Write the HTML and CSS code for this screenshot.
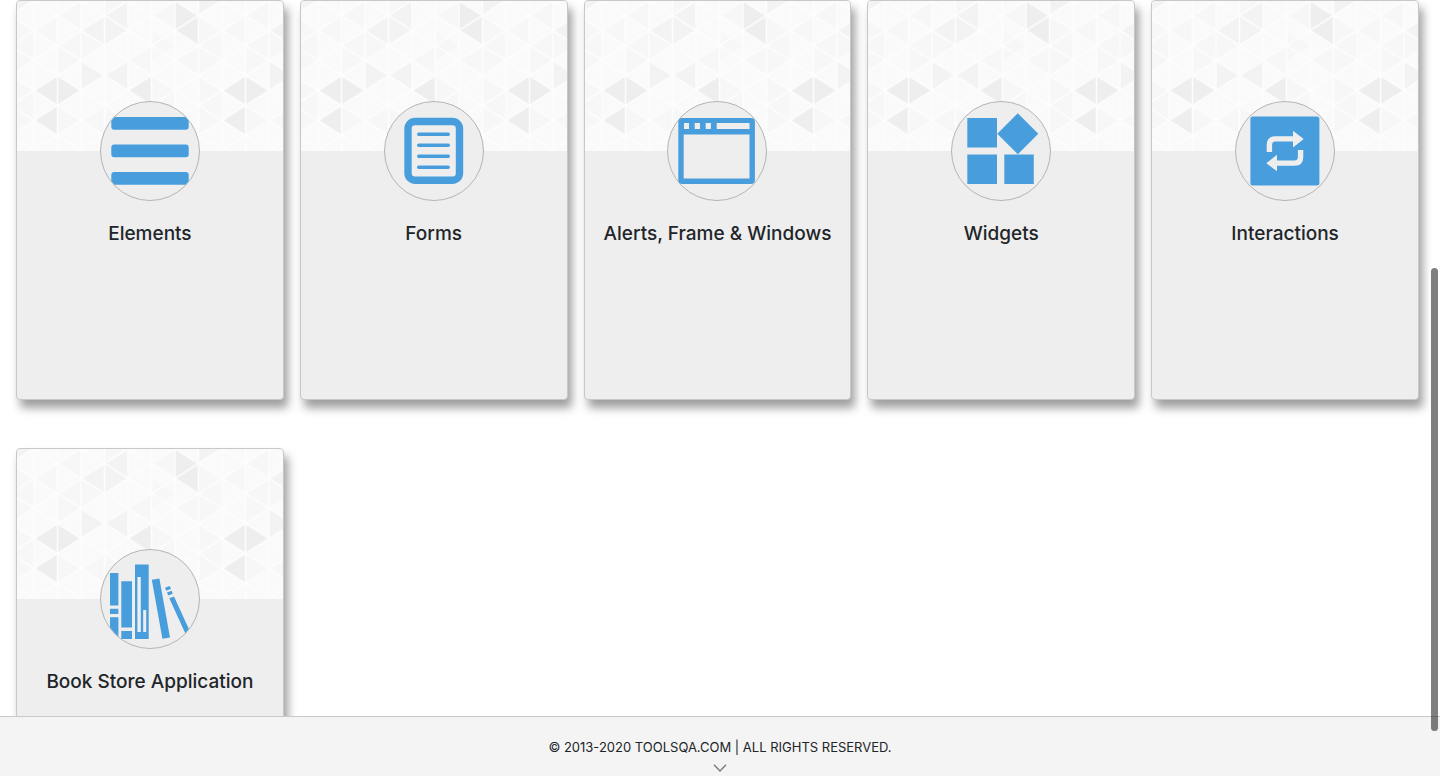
FILE: index.html
```html
<!DOCTYPE html>
<html lang="en">
<head>
<meta charset="utf-8">
<title>ToolsQA</title>
<link rel="stylesheet" href="styles.css">
</head>
<body>
<svg class="defs" width="0" height="0" aria-hidden="true">
  <defs>
    <clipPath id="disc"><circle cx="50" cy="50" r="49"/></clipPath>
    <pattern id="shades" x="34" y="-1" width="376" height="302" patternUnits="userSpaceOnUse">
      <rect width="376" height="302" fill="#fafafa"/>
      <path fill="#f7f7f7" d="M376 60l-47-30v60zM376 120l-47-30v60zM329 90l47-30v60zM376 180l-47-30v60zM0 60l47-30v60zM94 120l-47-30v60zM47 90l47-30v60zM188 120l47-30v60zM282 90l-47-30v60zM282 120l47-30v60zM282 180l-47-30v60zM235 210l47-30v60zM94 240l-47-30v60zM94 240l47-30v60zM188 240l-47-30v60zM141 270l47-30v60zM282 270l-47-30v60zM376 240l-47-30v60zM235 30l47-30v60zM47 30l47-30v60zM188 0l-47-30v60zM141 90l-47-30v60zM329 210l47-30v60z"/>
      <path fill="#f3f3f3" d="M94 60l47-30v60zM188 60l-47-30v60zM141 30l47-30v60zM141 150l-47-30v60zM141 150l47-30v60zM235 240l47-30v60zM376 0l-47-30v60z"/>
      <path fill="#eee" d="M0 180l47-30v60zM94 180l-47-30v60zM0 240l47-30v60zM188 180l47-30v60zM329 30l-47-30v60zM282 60l47-30v60z"/>
    </pattern>
    <pattern id="mesh" x="34" y="-1" width="94" height="60" patternUnits="userSpaceOnUse">
      <path d="M0 0L94 60M0 60L94 0M0 0V60M47 0V60M94 0V60" fill="none" stroke="#fdfdfd" stroke-width="3"/>
    </pattern>
    <symbol id="triangles" viewBox="0 0 532 300" preserveAspectRatio="xMinYMin slice">
      <rect width="600" height="300" fill="url(#shades)"/>
      <rect width="600" height="300" fill="url(#mesh)"/>
    </symbol>
  </defs>
</svg>

<main class="page">
  <div class="cards">
    <a class="card" href="#elements">
      <svg class="cover" aria-hidden="true"><use href="#triangles"/></svg>
      <svg class="avatar" viewBox="0 0 100 100" aria-hidden="true">
        <circle class="disc" cx="50" cy="50" r="49.5"/>
        <g class="glyph" clip-path="url(#disc)">
          <rect x="11.3" y="16" width="77.4" height="12.7" rx="3"/>
          <rect x="11.3" y="43.5" width="77.4" height="12.7" rx="3"/>
          <rect x="11.3" y="71" width="77.4" height="12.7" rx="3"/>
        </g>
      </svg>
      <h5 class="title">Elements</h5>
    </a>
    <a class="card" href="#forms">
      <svg class="cover" aria-hidden="true"><use href="#triangles"/></svg>
      <svg class="avatar" viewBox="0 0 100 100" aria-hidden="true">
        <circle class="disc" cx="50" cy="50" r="49.5"/>
        <rect class="line" x="24" y="20.5" width="51.5" height="58.7" rx="7" stroke-width="7.4"/>
        <path class="line" stroke-width="3.4" stroke-linecap="round" d="M34.7 33.3H64.3M34.7 44.3H64.3M34.7 55.3H64.3M34.7 66.3H64.3"/>
      </svg>
      <h5 class="title">Forms</h5>
    </a>
    <a class="card" href="#alerts">
      <svg class="cover" aria-hidden="true"><use href="#triangles"/></svg>
      <svg class="avatar" viewBox="0 0 100 100" aria-hidden="true">
        <circle class="disc" cx="50" cy="50" r="49.5"/>
        <path class="glyph" fill-rule="evenodd" d="M15.3 17H83.9a4 4 0 0 1 4 4V79a4 4 0 0 1-4 4H15.3a4 4 0 0 1-4-4V21a4 4 0 0 1 4-4zM17 22v6h5v-6zM27.7 22v6H33v-6zM38.7 22v6h5.2v-6zM49.7 22v6h32.8v-6zM16.7 33.4V77.4H82.5V33.4z"/>
      </svg>
      <h5 class="title">Alerts, Frame &amp; Windows</h5>
    </a>
    <a class="card" href="#widgets">
      <svg class="cover" aria-hidden="true"><use href="#triangles"/></svg>
      <svg class="avatar" viewBox="0 0 100 100" aria-hidden="true">
        <circle class="disc" cx="50" cy="50" r="49.5"/>
        <path class="glyph" d="M16.3 17H46V46.5H16.3zM16.3 53.5H46V83H16.3zM53.3 53.5H82.8V83H53.3zM66.8 12.3L87.3 32.8 66.8 53.3 46.3 32.8z"/>
      </svg>
      <h5 class="title">Widgets</h5>
    </a>
    <a class="card" href="#interactions">
      <svg class="cover" aria-hidden="true"><use href="#triangles"/></svg>
      <svg class="avatar" viewBox="0 0 100 100" aria-hidden="true">
        <circle class="disc" cx="50" cy="50" r="49.5"/>
        <rect class="glyph" x="15.4" y="15.4" width="69" height="69" rx="2.5"/>
        <path class="cut-line" d="M34.4 51V44Q34.4 37.9 40.5 37.9H59M65.6 49V56Q65.6 62.1 59.5 62.1H41"/>
        <path class="cut" d="M58 29.7L68.7 38 58 46.5zM42 53.7L31.3 62.2 42 70.3z"/>
      </svg>
      <h5 class="title">Interactions</h5>
    </a>
    <a class="card" href="#books">
      <svg class="cover" aria-hidden="true"><use href="#triangles"/></svg>
      <svg class="avatar" viewBox="0 0 100 100" aria-hidden="true">
        <circle class="disc" cx="50" cy="50" r="49.5"/>
        <g clip-path="url(#disc)">
          <path class="glyph" fill-rule="evenodd" d="M10 24H18.4V56.4H10zM10 59.7H18.4V65H10zM10 68.3H18.4V90H10zM21.3 32.3H32V78.4H21.3zM21.3 82H32V90H21.3zM35 15.5H48.7V90H35zM37.4 28V83H40.8V28zM43.2 61V83H46.2V61zM51.8 30.7L59.4 29.4 70 88.4 62.4 89.8zM69.3 49.3L74 47.4 93 89 88.3 91zM65 38.8L69.7 37 71 39.8 66.3 41.7zM67 43.6L71.6 41.8 72.8 44.8 68.2 46.6z"/>
        </g>
      </svg>
      <h5 class="title">Book Store Application</h5>
    </a>
  </div>
  <div class="scroll-thumb"></div>
</main>

<footer class="footer">
  <span>© 2013-2020 TOOLSQA.COM | ALL RIGHTS RESERVED.</span>
  <svg class="chevron" width="14" height="8" viewBox="0 0 14 8" aria-hidden="true"><path d="M1 0.8L7 7L13 0.8"/></svg>
</footer>
</body>
</html>
```
FILE: styles.css
```css
* {
  box-sizing: border-box;
}

body {
  margin: 0;
  height: 100vh;
  display: flex;
  flex-direction: column;
  overflow: hidden;
  background: #fff;
  color: #212529;
  font-family: Inter, "Liberation Sans", sans-serif;
}

.defs {
  position: absolute;
}

.page {
  flex: 1;
  min-height: 0;
  overflow: hidden;
}

.cards {
  display: grid;
  grid-template-columns: repeat(5, 1fr);
  column-gap: 16px;
  row-gap: 48px;
  padding: 0 21px 48px 16px;
}

.card {
  display: flex;
  flex-direction: column;
  align-items: center;
  min-height: 400px;
  overflow: hidden;
  border: 1px solid #c8c8c8;
  border-radius: 4px;
  background: #eee;
  box-shadow: 4px 8px 10px rgba(0, 0, 0, 0.38);
  color: inherit;
  text-decoration: none;
}

.cover {
  display: block;
  width: 100%;
  height: 150px;
}

.avatar {
  display: block;
  width: 100px;
  height: 100px;
  margin-top: -50px;
}

.disc {
  fill: #eee;
  stroke: #b4b4b4;
}

.glyph {
  fill: #489edc;
}

.line {
  fill: none;
  stroke: #489edc;
}

.cut {
  fill: #eee;
}

.cut-line {
  fill: none;
  stroke: #eee;
  stroke-width: 5.4;
}

.title {
  margin: 21px 0 0;
  font-size: 19px;
  font-weight: 500;
  line-height: 24px;
  text-align: center;
}

.footer {
  display: flex;
  flex-direction: column;
  align-items: center;
  gap: 8px;
  height: 60px;
  padding-top: 22px;
  border-top: 1px solid #c8c8c8;
  background: #f4f4f4;
  font-size: 13px;
  line-height: 17px;
}

.chevron {
  flex: none;
  fill: none;
  stroke: #777;
  stroke-width: 1.3;
}

.scroll-thumb {
  position: absolute;
  top: 268px;
  right: 2px;
  bottom: 45px;
  width: 7px;
  border-radius: 4px;
  background: rgba(0, 0, 0, 0.5);
}
```
